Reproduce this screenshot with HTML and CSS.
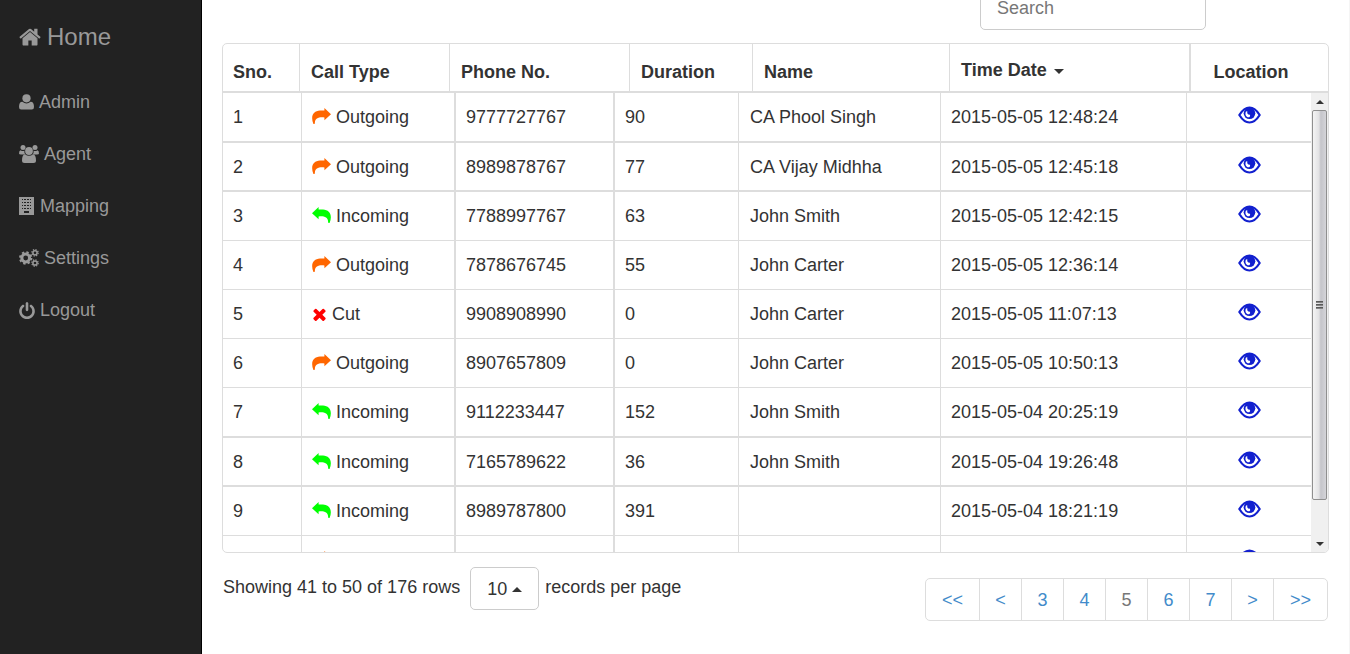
FILE: index.html
```html
<!DOCTYPE html>
<html lang="en">
<head>
<meta charset="utf-8">
<title>Call Log</title>
<link rel="stylesheet" href="styles.css">
</head>
<body>
<svg class="defs" aria-hidden="true">
  <symbol id="forward" viewBox="0 0 19 16"><path d="M1.400 16C-1.800 8 1.500 2.900 8 2.600H12.400V0L19 6.200L12.400 12.200V9.400C7 8.800 2.400 10 2.900 15.700Z"/></symbol>
  <symbol id="reply" viewBox="0 0 19 16"><path d="M17.600 16C20.800 8 17.500 2.900 11 2.600H6.600V0L0 6.200L6.600 12.200V9.400C12 8.800 16.600 10 16.100 15.700Z"/></symbol>
  <symbol id="cross" viewBox="300 300 1192 1256"><path d="M1490 1322q0 40-28 68l-136 136q-28 28-68 28t-68-28l-294-294-294 294q-28 28-68 28t-68-28l-136-136q-28-28-28-68t28-68l294-294-294-294q-28-28-28-68t28-68l136-136q28-28 68-28t68 28l294 294 294-294q28-28 68-28t68 28l136 136q28 28 28 68t-28 68l-294 294 294 294q28 28 28 68z"/></symbol>
  <symbol id="eye" viewBox="0 0 23 18">
    <path d="M1.300 9Q6 1.500 11.500 1.500T21.700 9Q17 16.500 11.500 16.500T1.300 9Z" fill="none" stroke="currentColor" stroke-width="2.200" stroke-linejoin="round"/>
    <circle cx="11.500" cy="7.300" r="5.800"/>
    <path d="M8 5.500C6.400 8.800 8.600 11.700 11.200 11.200C12.500 10.700 12.400 9.300 11.500 8.600C9.900 9 8.900 7.400 9.300 5.300Z" fill="#fff"/>
  </symbol>
</svg>
<div class="app">
  <nav class="sidebar">
    <a class="brand" href="#"><svg width="22" height="18" viewBox="50 230 1690 1320"><path d="M1472 992v480q0 26-19 45t-45 19h-384v-384h-256v384h-384q-26 0-45-19t-19-45v-480q0-1 .5-3t.5-3l575-474 575 474q1 2 1 6zm223-69l-62 74q-8 9-21 11h-3q-13 0-21-7l-692-577-692 577q-12 8-24 7-13-2-21-11l-62-74q-8-10-7-23.500t11-21.500l719-599q32-26 76-26t76 26l244 204v-195q0-14 9-23t23-9h192q14 0 23 9t9 23v408l219 182q10 8 11 21.500t-7 23.500z"/></svg>Home</a>
    <a class="item" href="#"><svg width="15" height="16" viewBox="0 0 15 16"><circle cx="7.500" cy="4.300" r="4.100"/><path d="M0 13Q0 7.800 3.400 7.800Q7.500 11 11.600 7.800Q15 7.800 15 13Q15 15.500 12.800 15.500H2.200Q0 15.500 0 13Z"/></svg>Admin</a>
    <a class="item" href="#"><svg width="20" height="18" viewBox="0 0 20 18"><circle cx="4" cy="2.600" r="2.500"/><circle cx="16" cy="2.600" r="2.500"/><path d="M0 8.500Q0 5.500 1.500 5.200Q4 6.800 5.400 5.600Q5 7.800 6.400 9.600H2Q0 9.600 0 8.500ZM20 8.500Q20 5.500 18.500 5.200Q16 6.800 14.600 5.600Q15 7.800 13.600 9.600H18Q20 9.600 20 8.500Z"/><circle cx="10" cy="6" r="3.900"/><path d="M3 15.500Q3 9.500 6 9.200Q10 12.200 14 9.200Q17 9.500 17 15.500Q17 18 14.500 18H5.500Q3 18 3 15.500Z"/></svg>Agent</a>
    <a class="item" href="#"><svg width="16" height="18" viewBox="0 0 16 18"><path fill-rule="evenodd" d="M0 0H15V18H0ZM3 2V3H4V2ZM5 2V3H7V2ZM8 2V3H10V2ZM11 2V3H12V2ZM3 5V6H4V5ZM5 5V6H7V5ZM8 5V6H10V5ZM11 5V6H12V5ZM3 8V9H4V8ZM5 8V9H7V8ZM8 8V9H10V8ZM11 8V9H12V8ZM3 11V12H4V11ZM5 11V12H7V11ZM8 11V12H10V11ZM11 11V12H12V11ZM5 14V16H10V14Z"/></svg>Mapping</a>
    <a class="item" href="#"><svg class="line" width="20" height="18" viewBox="0 0 20 18"><circle cx="6.700" cy="9" r="3.900" stroke-width="3"/><circle cx="6.700" cy="9" r="5.700" stroke-width="2" stroke-dasharray="2.300 2.177"/><circle cx="16" cy="3.800" r="2.100" stroke-width="1.500"/><circle cx="16" cy="3.800" r="3.200" stroke-width="1.200" stroke-dasharray="1.300 1.213"/><circle cx="16" cy="14" r="2.100" stroke-width="1.500"/><circle cx="16" cy="14" r="3.200" stroke-width="1.200" stroke-dasharray="1.300 1.213"/></svg>Settings</a>
    <a class="item" href="#"><svg width="16" height="17" viewBox="128 0 1536 1664"><path d="M1664 896q0 156-61 298t-164 245-245 164-298 61-298-61-245-164-164-245-61-298q0-182 80.500-343t226.500-270q43-32 95.500-25t83.500 50q32 42 24.500 94.500t-49.500 84.500q-98 74-151.500 181t-53.500 228q0 104 40.500 198.500t109.500 163.500 163.500 109.500 198.500 40.500 198.500-40.500 163.500-109.500 109.500-163.500 40.500-198.500q0-121-53.500-228t-151.500-181q-42-32-49.500-84.500t24.500-94.500q31-43 84-50t95 25q146 109 226.500 270t80.500 343zm-640-768v640q0 52-38 90t-90 38-90-38-38-90v-640q0-52 38-90t90-38 90 38 38 90z"/></svg>Logout</a>
  </nav>
  <main class="main">
    <div class="toolbar"><input class="search" type="text" placeholder="Search" aria-label="Search"></div>
    <section class="grid">
      <table class="head">
        <colgroup><col class="h-sno"><col class="h-type"><col class="h-phone"><col class="h-duration"><col><col class="h-time"><col class="h-location"></colgroup>
        <thead><tr><th>Sno.</th><th>Call Type</th><th>Phone No.</th><th>Duration</th><th>Name</th><th class="sorted"><button class="sort" type="button">Time Date<span class="caret"></span></button></th><th class="location">Location</th></tr></thead>
      </table>
      <div class="view">
        <div class="rows">
          <table class="body">
            <colgroup><col class="b-sno"><col class="b-type"><col class="b-phone"><col class="b-duration"><col><col class="b-time"><col class="b-location"></colgroup>
            <tbody id="calls"></tbody>
          </table>
        </div>
        <div class="scrollbar" aria-hidden="true">
          <span class="arrow up"></span>
          <span class="thumb"><i></i><i></i><i></i></span>
          <span class="arrow down"></span>
        </div>
      </div>
    </section>
    <footer class="footer">
      <div class="summary"><span>Showing 41 to 50 of 176 rows</span><button class="size" type="button">10<span class="caret flip"></span></button><span>records per page</span></div>
      <nav class="pages" aria-label="Pages"><a class="end" href="#">&lt;&lt;</a><a href="#">&lt;</a><a href="#">3</a><a href="#">4</a><a class="current" href="#" aria-current="page">5</a><a href="#">6</a><a href="#">7</a><a href="#">&gt;</a><a class="end" href="#">&gt;&gt;</a></nav>
    </footer>
  </main>
</div>
<script src="calls.js"></script>
</body>
</html>
```
FILE: styles.css
```css
* { box-sizing: border-box; }
body {
  margin: 0;
  font: 18px/26px "Liberation Sans", Arial, sans-serif;
  color: #333;
  background: #fff;
  overflow: hidden;
}
button, input { font: inherit; color: inherit; }
a { text-decoration: none; }
svg { fill: currentColor; flex: none; }
svg.line { fill: none; stroke: currentColor; }
.defs { display: none; }
.app { display: flex; min-height: 100vh; }

.sidebar {
  flex: none;
  width: 202px;
  padding: 10px 0 0 19px;
  background: #222;
  border-right: 1px solid #000;
}
.sidebar a { display: flex; align-items: center; color: #999; }
.brand { height: 54px; gap: 6px; margin-bottom: 12px; font-size: 24px; }
.item { height: 52px; gap: 5px; }

.main {
  flex: 1;
  min-width: 0;
  padding: 0 20px;
  border-right: 1px solid #f5f5f5;
}
.toolbar { display: flex; justify-content: flex-end; margin: -13px 123px 13px 0; }
.search {
  width: 226px;
  height: 43px;
  padding: 0 16px;
  border: 1px solid #ccc;
  border-radius: 5px;
}
.search::placeholder { color: #777; opacity: 1; }

.grid { border: 1px solid #ddd; border-radius: 5px; overflow: hidden; }
table { width: 100%; table-layout: fixed; border-collapse: separate; border-spacing: 0; }
.head th {
  height: 49px;
  padding: 0 10px 6px 11px;
  text-align: left;
  vertical-align: bottom;
  border-right: 1px solid #ddd;
  border-bottom: 2px solid #ddd;
}
.head th:first-child { padding-left: 10px; }
.head .sorted { padding-bottom: 8px; border-right-width: 2px; }
.head .location { padding: 0 17px 6px 0; text-align: center; border-right: 0; }
.sort { display: flex; align-items: center; gap: 7px; padding: 0; border: 0; background: none; font-weight: bold; }
.caret { border: 5px solid transparent; border-top-color: currentColor; border-bottom: 0; margin-top: 2px; }
.caret.flip { border-bottom: 5px solid; border-top: 0; border-left-color: transparent; border-right-color: transparent; }
.h-sno { width: 77px; }
.h-type { width: 150px; }
.h-phone { width: 180px; }
.h-duration { width: 123px; }
.h-time { width: 241px; }
.h-location { width: 137px; }
.b-sno { width: 79px; }
.b-type { width: 154px; }
.b-phone { width: 159px; }
.b-duration { width: 124px; }
.b-time { width: 246px; }
.b-location { width: 124px; }

.view { display: flex; height: 459px; }
.rows { flex: 1; min-width: 0; overflow: hidden; }
.body td {
  height: 49px;
  padding: 11px 10px 0;
  vertical-align: top;
  border-right: 1px solid #ddd;
  border-bottom: 1px solid #ddd;
}
.body .tall td { height: 50px; }
.body .heavy td { border-bottom-width: 2px; }
.body td:nth-child(2), .body td:nth-child(3) { border-right-width: 2px; }
.body td:nth-child(5) { padding-left: 11px; }
.body td:last-child { padding: 0; text-align: center; border-right: 0; }
.call { display: flex; align-items: center; gap: 5px; height: 26px; }
.call svg { width: 19px; height: 16px; margin-bottom: 2px; }
.call .cross { width: 15px; height: 13px; margin-bottom: 0; }
.outgoing { color: #f60; }
.incoming { color: #0f0; }
.cross { color: #f00; }
.view-location { display: block; height: 45px; padding-top: 13px; line-height: 0; color: #1220cf; }
.view-location svg { width: 23px; height: 18px; }

.scrollbar {
  display: flex;
  flex-direction: column;
  width: 17px;
  padding: 0 1px;
  background: #f0f0f0;
}
.arrow { display: flex; height: 17px; align-items: center; justify-content: center; }
.arrow::after { content: ""; border: 4px solid transparent; }
.up::after { border-bottom-color: #333; border-top: 0; }
.down { margin-top: auto; }
.down::after { border-top-color: #333; border-bottom: 0; }
.thumb {
  display: flex;
  flex-direction: column;
  align-items: center;
  justify-content: center;
  gap: 1px;
  height: 390px;
  border: 1px solid #8f8f8f;
  border-radius: 2px;
  background: linear-gradient(to right, #f4f4f4, #e2e2e4 45%, #c5c5ca 60%, #d4d4d8);
}
.thumb i { width: 7px; height: 2px; background: linear-gradient(#444, #999); }

.footer { display: flex; justify-content: space-between; padding-top: 14px; }
.summary { display: flex; gap: 6px; padding-left: 1px; }
.summary > span { padding-top: 7px; }
.size {
  display: flex;
  align-items: center;
  gap: 5px;
  height: 43px;
  margin-left: 4px;
  padding: 0 16px;
  border: 1px solid #ccc;
  border-radius: 5px;
  background: #fff;
}
.pages { display: flex; padding-top: 11px; margin-right: 1px; }
.pages a {
  width: 43px;
  height: 43px;
  margin-left: -1px;
  line-height: 43px;
  text-align: center;
  color: #428bca;
  border: 1px solid #ddd;
}
.pages .end { width: 55px; }
.pages a:first-child { border-radius: 5px 0 0 5px; }
.pages a:last-child { border-radius: 0 5px 5px 0; }
.pages .current { color: #777; }
```
FILE: calls.js
```js
const calls = [
  ["1", "Outgoing", "9777727767", "90", "CA Phool Singh", "2015-05-05 12:48:24", "tall heavy"],
  ["2", "Outgoing", "8989878767", "77", "CA Vijay Midhha", "2015-05-05 12:45:18", "heavy"],
  ["3", "Incoming", "7788997767", "63", "John Smith", "2015-05-05 12:42:15", ""],
  ["4", "Outgoing", "7878676745", "55", "John Carter", "2015-05-05 12:36:14", ""],
  ["5", "Cut", "9908908990", "0", "John Carter", "2015-05-05 11:07:13", ""],
  ["6", "Outgoing", "8907657809", "0", "John Carter", "2015-05-05 10:50:13", ""],
  ["7", "Incoming", "9112233447", "152", "John Smith", "2015-05-04 20:25:19", "tall heavy"],
  ["8", "Incoming", "7165789622", "36", "John Smith", "2015-05-04 19:26:48", "heavy"],
  ["9", "Incoming", "8989787800", "391", "", "2015-05-04 18:21:19", ""],
  ["", "Outgoing", "", "", "", "", ""]
];
const icons = {
  Outgoing: '<svg class="outgoing"><use href="#forward"/></svg>',
  Incoming: '<svg class="incoming"><use href="#reply"/></svg>',
  Cut: '<svg class="cross"><use href="#cross"/></svg>'
};
document.getElementById("calls").innerHTML = calls.map(([sno, type, phone, duration, name, time, size]) =>
  `<tr class="${size}"><td>${sno}</td><td><span class="call">${icons[type]}${sno ? type : ""}</span></td>` +
  `<td>${phone}</td><td>${duration}</td><td>${name}</td><td>${time}</td>` +
  `<td><a class="view-location" href="#" aria-label="View location"><svg><use href="#eye"/></svg></a></td></tr>`
).join("");
```
